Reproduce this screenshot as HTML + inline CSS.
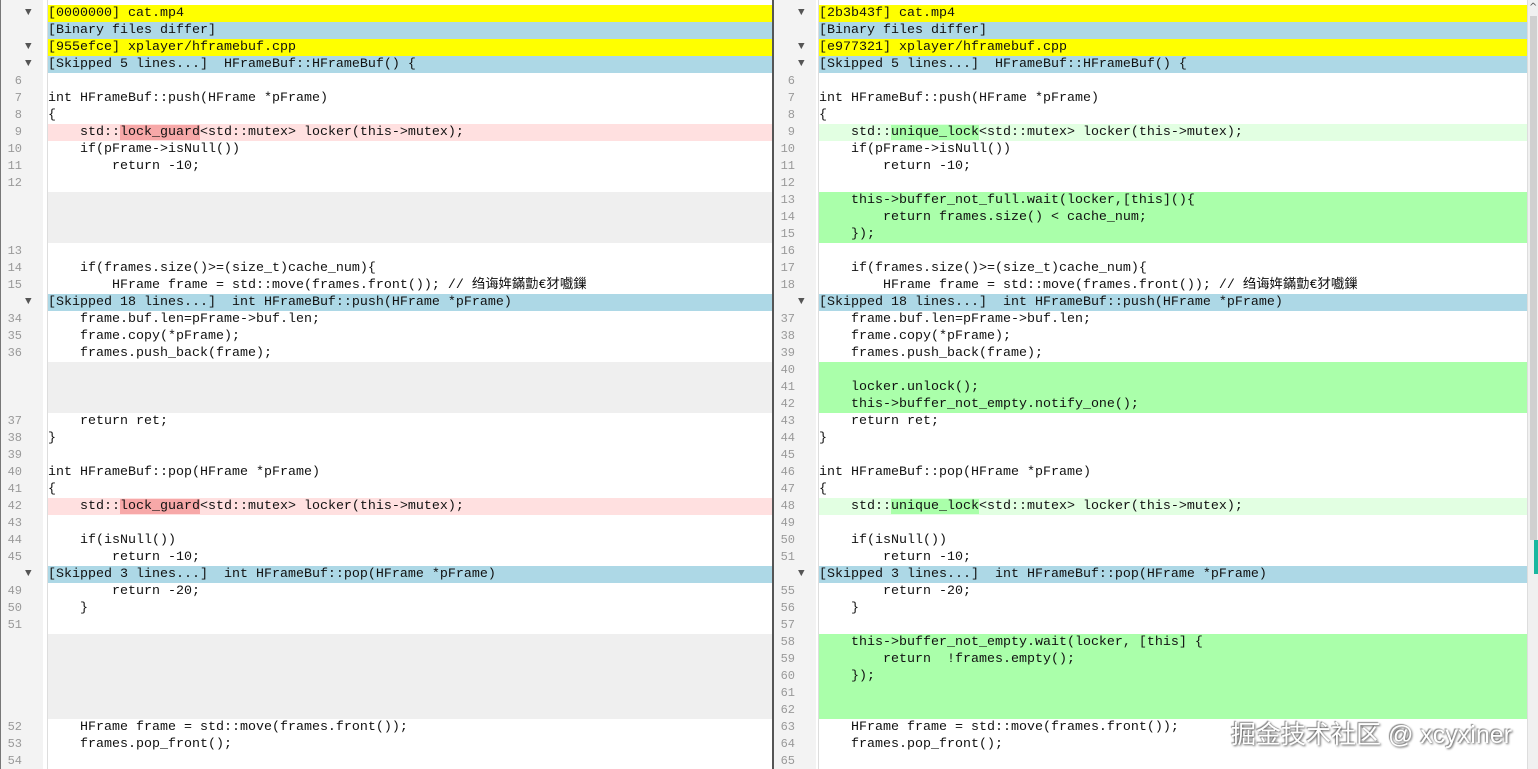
<!DOCTYPE html>
<html><head><meta charset="utf-8"><style>
*{margin:0;padding:0;box-sizing:border-box}
body{width:1538px;height:769px;overflow:hidden;background:#fff;font-family:"Liberation Mono","Noto Sans CJK SC",monospace;font-size:13.33px;color:#111;position:relative}
.pane{position:absolute;top:0;height:769px;overflow:hidden;background:#fff}
.gut{position:absolute;left:0;top:0;width:42px;height:769px;background:#f3f3f3}
.gl{position:absolute;left:46px;top:0;width:1px;height:769px;background:#ddd}
.rows{position:absolute;left:0;top:5px;right:0}
.r{height:17px;line-height:17px;position:relative;white-space:pre}
.n{position:absolute;left:0;width:21px;text-align:right;color:#999;font-size:12px}
.t{position:absolute;left:24px;top:0;color:#555;font-size:11px}
.c{position:absolute;left:47px;right:0;top:0;height:17px;padding-left:0}
.y{background:#ffff00}.b{background:#add8e6}.g{background:#efefef}
.rd{background:#ffe0e0}.gr{background:#aaffaa}.lg{background:#e2ffe2}
.wr{background:#f7a8a8}.wg{background:#aaffaa}
</style></head><body>
<div class="pane" style="left:0;width:772px;border-left:1px solid #777">
<div class="gut"></div><div class="gl"></div>
<div class="rows">
<div class="r"><span class="t">▼</span><div class="c y">[0000000] cat.mp4</div></div>
<div class="r"><div class="c b">[Binary files differ]</div></div>
<div class="r"><span class="t">▼</span><div class="c y">[955efce] xplayer/hframebuf.cpp</div></div>
<div class="r"><span class="t">▼</span><div class="c b">[Skipped 5 lines...]  HFrameBuf::HFrameBuf() {</div></div>
<div class="r"><span class="n">6</span><div class="c"></div></div>
<div class="r"><span class="n">7</span><div class="c">int HFrameBuf::push(HFrame *pFrame)</div></div>
<div class="r"><span class="n">8</span><div class="c">{</div></div>
<div class="r"><span class="n">9</span><div class="c rd">    std::<span class="wr">lock_guard</span>&lt;std::mutex&gt; locker(this-&gt;mutex);</div></div>
<div class="r"><span class="n">10</span><div class="c">    if(pFrame-&gt;isNull())</div></div>
<div class="r"><span class="n">11</span><div class="c">        return -10;</div></div>
<div class="r"><span class="n">12</span><div class="c"></div></div>
<div class="r"><div class="c g"></div></div>
<div class="r"><div class="c g"></div></div>
<div class="r"><div class="c g"></div></div>
<div class="r"><span class="n">13</span><div class="c"></div></div>
<div class="r"><span class="n">14</span><div class="c">    if(frames.size()&gt;=(size_t)cache_num){</div></div>
<div class="r"><span class="n">15</span><div class="c">        HFrame frame = std::move(frames.front()); // 绉诲姩鏋勯€犲嚱鏁</div></div>
<div class="r"><span class="t">▼</span><div class="c b">[Skipped 18 lines...]  int HFrameBuf::push(HFrame *pFrame)</div></div>
<div class="r"><span class="n">34</span><div class="c">    frame.buf.len=pFrame-&gt;buf.len;</div></div>
<div class="r"><span class="n">35</span><div class="c">    frame.copy(*pFrame);</div></div>
<div class="r"><span class="n">36</span><div class="c">    frames.push_back(frame);</div></div>
<div class="r"><div class="c g"></div></div>
<div class="r"><div class="c g"></div></div>
<div class="r"><div class="c g"></div></div>
<div class="r"><span class="n">37</span><div class="c">    return ret;</div></div>
<div class="r"><span class="n">38</span><div class="c">}</div></div>
<div class="r"><span class="n">39</span><div class="c"></div></div>
<div class="r"><span class="n">40</span><div class="c">int HFrameBuf::pop(HFrame *pFrame)</div></div>
<div class="r"><span class="n">41</span><div class="c">{</div></div>
<div class="r"><span class="n">42</span><div class="c rd">    std::<span class="wr">lock_guard</span>&lt;std::mutex&gt; locker(this-&gt;mutex);</div></div>
<div class="r"><span class="n">43</span><div class="c"></div></div>
<div class="r"><span class="n">44</span><div class="c">    if(isNull())</div></div>
<div class="r"><span class="n">45</span><div class="c">        return -10;</div></div>
<div class="r"><span class="t">▼</span><div class="c b">[Skipped 3 lines...]  int HFrameBuf::pop(HFrame *pFrame)</div></div>
<div class="r"><span class="n">49</span><div class="c">        return -20;</div></div>
<div class="r"><span class="n">50</span><div class="c">    }</div></div>
<div class="r"><span class="n">51</span><div class="c"></div></div>
<div class="r"><div class="c g"></div></div>
<div class="r"><div class="c g"></div></div>
<div class="r"><div class="c g"></div></div>
<div class="r"><div class="c g"></div></div>
<div class="r"><div class="c g"></div></div>
<div class="r"><span class="n">52</span><div class="c">    HFrame frame = std::move(frames.front());</div></div>
<div class="r"><span class="n">53</span><div class="c">    frames.pop_front();</div></div>
<div class="r"><span class="n">54</span><div class="c"></div></div>
</div></div>
<div style="position:absolute;left:772px;top:0;width:2px;height:769px;background:#555"></div>
<div class="pane" style="left:774px;width:753px">
<div class="gut"></div><div class="gl" style="left:44px"></div>
<div class="rows">
<div class="r"><span class="t">▼</span><div class="c y" style="left:45px">[2b3b43f] cat.mp4</div></div>
<div class="r"><div class="c b" style="left:45px">[Binary files differ]</div></div>
<div class="r"><span class="t">▼</span><div class="c y" style="left:45px">[e977321] xplayer/hframebuf.cpp</div></div>
<div class="r"><span class="t">▼</span><div class="c b" style="left:45px">[Skipped 5 lines...]  HFrameBuf::HFrameBuf() {</div></div>
<div class="r"><span class="n">6</span></div>
<div class="r"><span class="n">7</span><div class="c" style="left:45px">int HFrameBuf::push(HFrame *pFrame)</div></div>
<div class="r"><span class="n">8</span><div class="c" style="left:45px">{</div></div>
<div class="r"><span class="n">9</span><div class="c lg" style="left:45px">    std::<span class="wg">unique_lock</span>&lt;std::mutex&gt; locker(this-&gt;mutex);</div></div>
<div class="r"><span class="n">10</span><div class="c" style="left:45px">    if(pFrame-&gt;isNull())</div></div>
<div class="r"><span class="n">11</span><div class="c" style="left:45px">        return -10;</div></div>
<div class="r"><span class="n">12</span></div>
<div class="r"><span class="n">13</span><div class="c gr" style="left:45px">    this-&gt;buffer_not_full.wait(locker,[this](){</div></div>
<div class="r"><span class="n">14</span><div class="c gr" style="left:45px">        return frames.size() &lt; cache_num;</div></div>
<div class="r"><span class="n">15</span><div class="c gr" style="left:45px">    });</div></div>
<div class="r"><span class="n">16</span></div>
<div class="r"><span class="n">17</span><div class="c" style="left:45px">    if(frames.size()&gt;=(size_t)cache_num){</div></div>
<div class="r"><span class="n">18</span><div class="c" style="left:45px">        HFrame frame = std::move(frames.front()); // 绉诲姩鏋勯€犲嚱鏁</div></div>
<div class="r"><span class="t">▼</span><div class="c b" style="left:45px">[Skipped 18 lines...]  int HFrameBuf::push(HFrame *pFrame)</div></div>
<div class="r"><span class="n">37</span><div class="c" style="left:45px">    frame.buf.len=pFrame-&gt;buf.len;</div></div>
<div class="r"><span class="n">38</span><div class="c" style="left:45px">    frame.copy(*pFrame);</div></div>
<div class="r"><span class="n">39</span><div class="c" style="left:45px">    frames.push_back(frame);</div></div>
<div class="r"><span class="n">40</span><div class="c gr" style="left:45px"></div></div>
<div class="r"><span class="n">41</span><div class="c gr" style="left:45px">    locker.unlock();</div></div>
<div class="r"><span class="n">42</span><div class="c gr" style="left:45px">    this-&gt;buffer_not_empty.notify_one();</div></div>
<div class="r"><span class="n">43</span><div class="c" style="left:45px">    return ret;</div></div>
<div class="r"><span class="n">44</span><div class="c" style="left:45px">}</div></div>
<div class="r"><span class="n">45</span></div>
<div class="r"><span class="n">46</span><div class="c" style="left:45px">int HFrameBuf::pop(HFrame *pFrame)</div></div>
<div class="r"><span class="n">47</span><div class="c" style="left:45px">{</div></div>
<div class="r"><span class="n">48</span><div class="c lg" style="left:45px">    std::<span class="wg">unique_lock</span>&lt;std::mutex&gt; locker(this-&gt;mutex);</div></div>
<div class="r"><span class="n">49</span></div>
<div class="r"><span class="n">50</span><div class="c" style="left:45px">    if(isNull())</div></div>
<div class="r"><span class="n">51</span><div class="c" style="left:45px">        return -10;</div></div>
<div class="r"><span class="t">▼</span><div class="c b" style="left:45px">[Skipped 3 lines...]  int HFrameBuf::pop(HFrame *pFrame)</div></div>
<div class="r"><span class="n">55</span><div class="c" style="left:45px">        return -20;</div></div>
<div class="r"><span class="n">56</span><div class="c" style="left:45px">    }</div></div>
<div class="r"><span class="n">57</span></div>
<div class="r"><span class="n">58</span><div class="c gr" style="left:45px">    this-&gt;buffer_not_empty.wait(locker, [this] {</div></div>
<div class="r"><span class="n">59</span><div class="c gr" style="left:45px">        return  !frames.empty();</div></div>
<div class="r"><span class="n">60</span><div class="c gr" style="left:45px">    });</div></div>
<div class="r"><span class="n">61</span><div class="c gr" style="left:45px"></div></div>
<div class="r"><span class="n">62</span><div class="c gr" style="left:45px"></div></div>
<div class="r"><span class="n">63</span><div class="c" style="left:45px">    HFrame frame = std::move(frames.front());</div></div>
<div class="r"><span class="n">64</span><div class="c" style="left:45px">    frames.pop_front();</div></div>
<div class="r"><span class="n">65</span></div>
</div></div>
<div style="position:absolute;left:1527px;top:0;width:11px;height:769px;background:#f0f0f0;border-left:1px solid #ddd"></div>
<div style="position:absolute;left:1530px;top:16px;width:7px;height:524px;background:#d0d0d0"></div>
<div style="position:absolute;left:1534px;top:540px;width:4px;height:34px;background:#1ab8a0"></div>
<div style="position:absolute;left:1529px;top:2px;font-size:10px;color:#555;font-family:'DejaVu Sans',sans-serif">^</div>
<div style="position:absolute;left:1231px;top:715px;font-family:'Liberation Sans','Noto Sans CJK SC',sans-serif;font-size:25px;color:#fff;text-shadow:1px 1px 2px #555,-1px -1px 1px #888;white-space:nowrap">掘金技术社区 @ xcyxiner</div>
</body></html>
